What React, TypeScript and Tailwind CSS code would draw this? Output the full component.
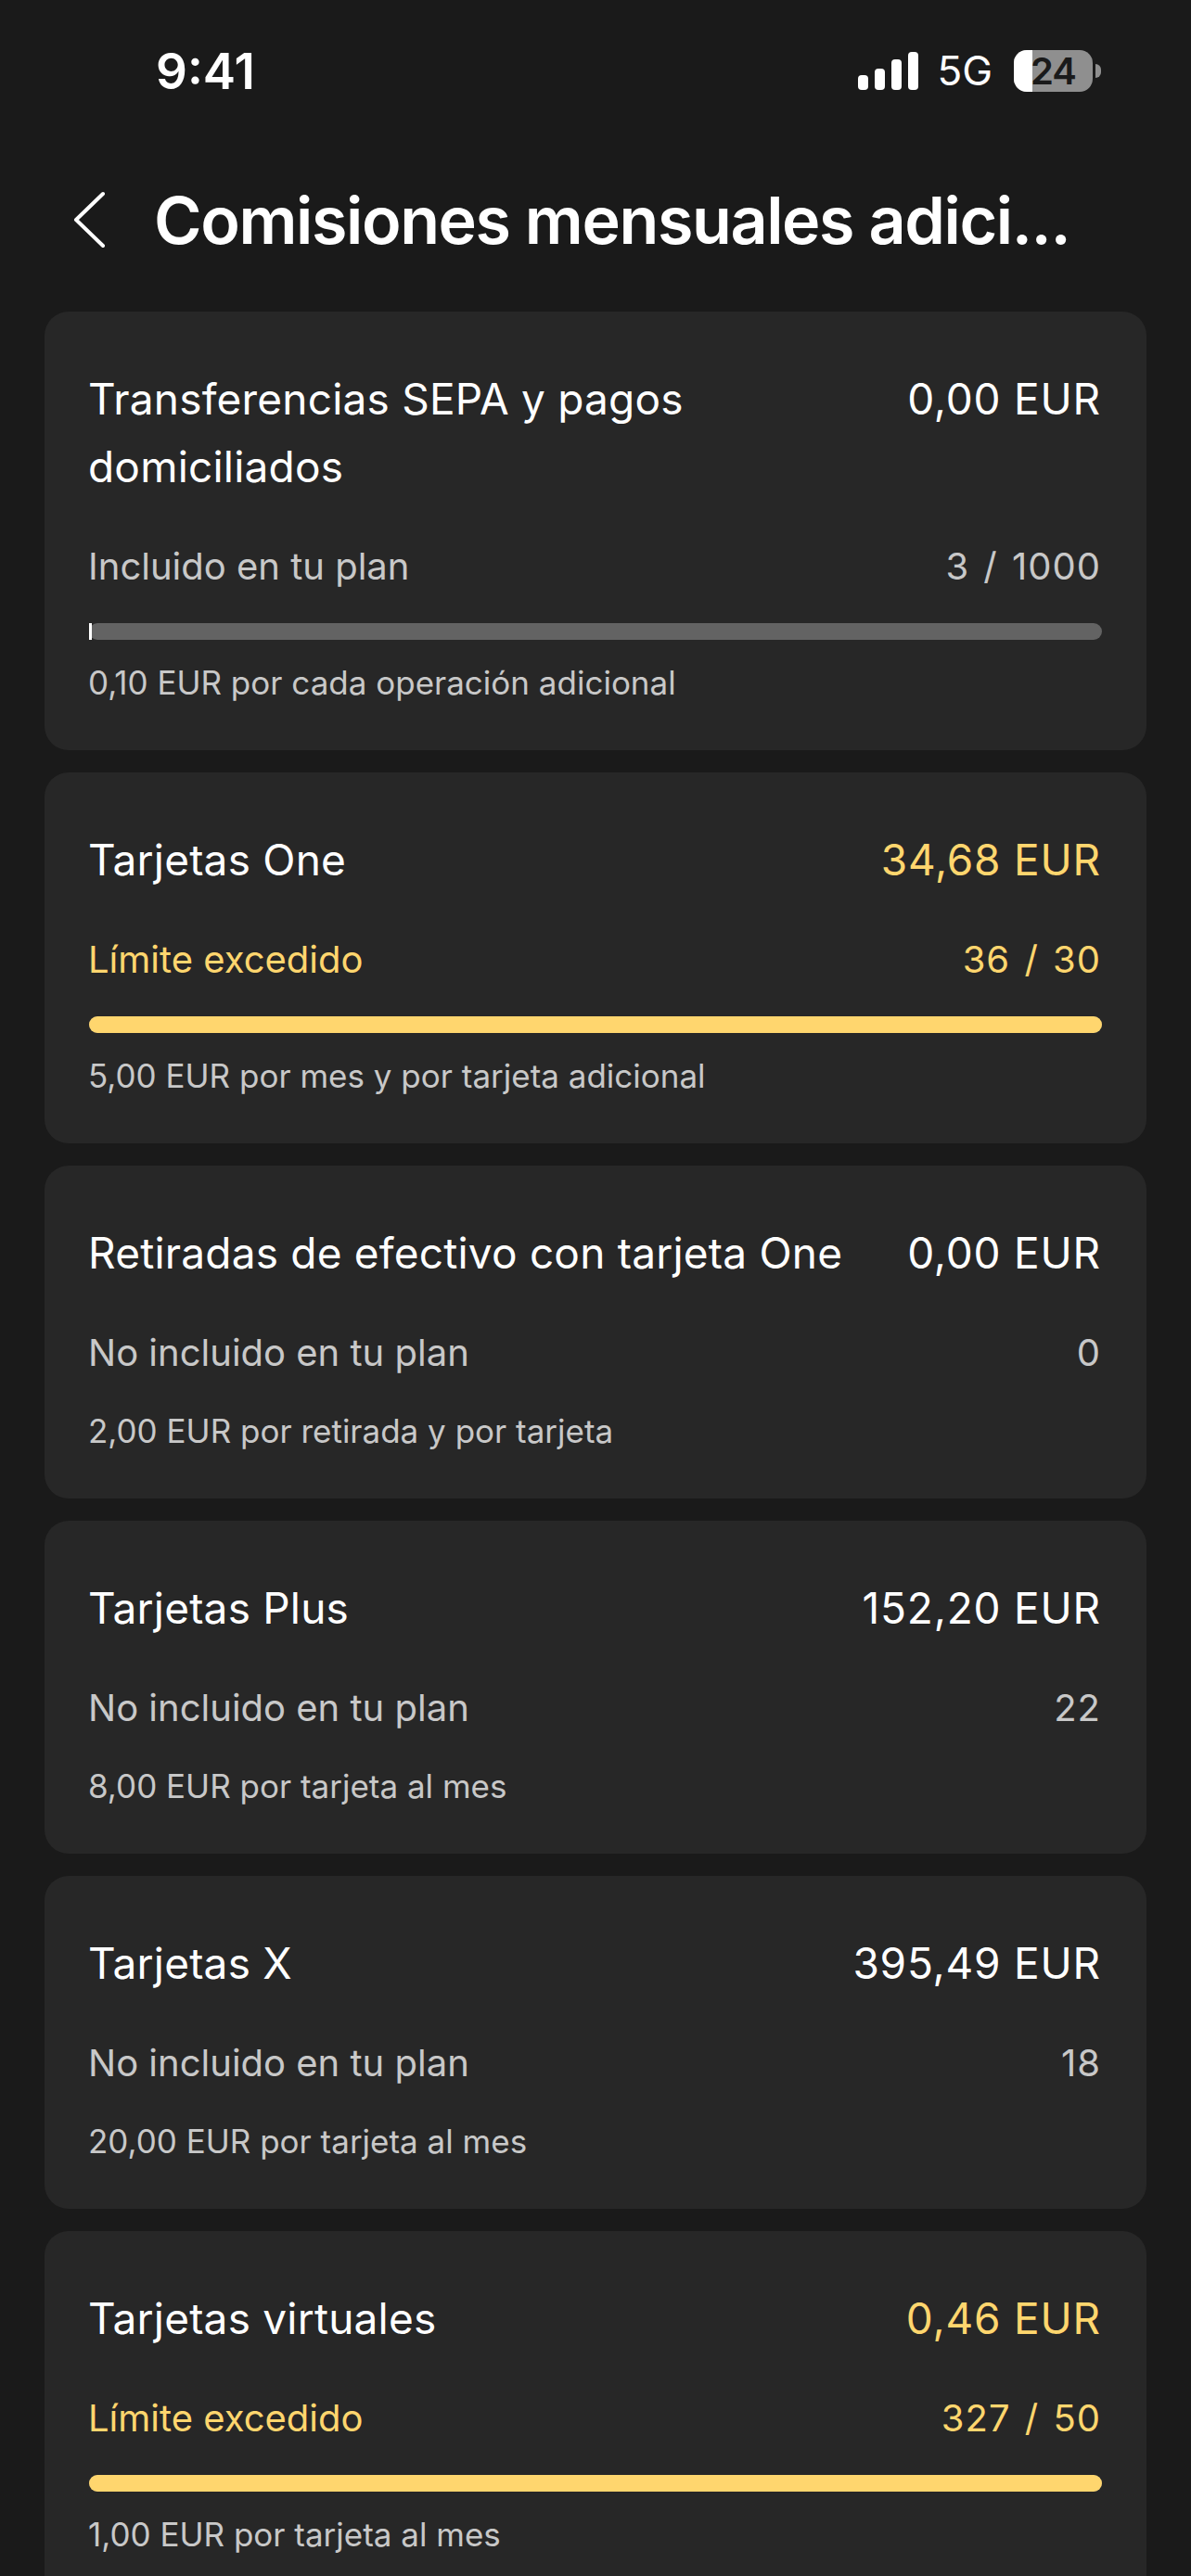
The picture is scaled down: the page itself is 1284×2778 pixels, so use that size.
type Fee = {
  title: string;
  amount: string;
  status: string;
  count: string;
  note: string;
  over?: boolean;
  bar?: "empty" | "full";
};

const fees: Fee[] = [
  { title: "Transferencias SEPA y pagos domiciliados", amount: "0,00 EUR", status: "Incluido en tu plan", count: "3 / 1000", note: "0,10 EUR por cada operación adicional", bar: "empty" },
  { title: "Tarjetas One", amount: "34,68 EUR", status: "Límite excedido", count: "36 / 30", note: "5,00 EUR por mes y por tarjeta adicional", over: true, bar: "full" },
  { title: "Retiradas de efectivo con tarjeta One", amount: "0,00 EUR", status: "No incluido en tu plan", count: "0", note: "2,00 EUR por retirada y por tarjeta" },
  { title: "Tarjetas Plus", amount: "152,20 EUR", status: "No incluido en tu plan", count: "22", note: "8,00 EUR por tarjeta al mes" },
  { title: "Tarjetas X", amount: "395,49 EUR", status: "No incluido en tu plan", count: "18", note: "20,00 EUR por tarjeta al mes" },
  { title: "Tarjetas virtuales", amount: "0,46 EUR", status: "Límite excedido", count: "327 / 50", note: "1,00 EUR por tarjeta al mes", over: true, bar: "full" },
];

function StatusBar() {
  return (
    <div className="flex h-[152px] items-center justify-between pl-[168px] pr-[97px]">
      <span className="pt-[3px] text-[53px] font-semibold text-white">9:41</span>
      <div className="flex items-center">
        <svg width="65" height="41" viewBox="0 0 65 41" fill="white">
          <rect x="0" y="25" width="11" height="16" rx="4" />
          <rect x="18" y="18" width="11" height="23" rx="4" />
          <rect x="36" y="8" width="11" height="33" rx="4" />
          <rect x="54" y="0" width="11" height="41" rx="4" />
        </svg>
        <span className="ml-[20px] text-[44px] leading-none text-white">5G</span>
        <div className="relative ml-[23px] flex h-[45px] w-[85px] items-center justify-center rounded-[14px] bg-[#8f8f8f]">
          <div className="absolute inset-y-0 left-0 w-[20px] rounded-l-[14px] bg-white" />
          <span className="relative text-[40px] font-semibold leading-[45px] tracking-[-1px] text-[#1a1a1a]">24</span>
        </div>
        <div className="ml-[3px] h-[15px] w-[6px] rounded-r-full bg-[#8f8f8f]" />
      </div>
    </div>
  );
}

function FeeCard({ fee }: { fee: Fee }) {
  return (
    <div className="rounded-[26px] bg-[#272727] px-[48px] pt-[58px] pb-[51px]">
      <div className="-ml-px mr-px flex justify-between gap-[60px] text-[46px] leading-[73px]">
        <span className="tracking-[0.2px] text-white">{fee.title}</span>
        <span className={`shrink-0 tracking-[0.8px] ${fee.over ? "text-[#ffd66e]" : "text-white"}`}>{fee.amount}</span>
      </div>
      <div className={`-ml-px mr-px mt-[46px] flex justify-between text-[40px] leading-[50px] ${fee.over ? "text-[#ffd66e]" : "text-[#c8c8c8]"}`}>
        <span>{fee.status}</span>
        <span className="tracking-[1px] [word-spacing:3px]">{fee.count}</span>
      </div>
      {fee.bar && (
        <div className="mt-[36px] h-[18px] rounded-[9px] bg-[#636363]">
          <div className={fee.bar === "full" ? "h-full w-full rounded-[9px] bg-[#ffd66e]" : "h-full w-[3px] bg-white"} />
        </div>
      )}
      <p className={`-ml-px text-[35px] leading-[44px] text-[#c8c8c8] ${fee.bar ? "mt-[24px]" : "mt-[37px]"}`}>{fee.note}</p>
    </div>
  );
}

export default function App() {
  return (
    <div className="h-[2778px] overflow-hidden bg-[#1a1a1a] font-['Inter',sans-serif]">
      <StatusBar />
      <div className="flex h-[184px] items-center pb-[14px] pl-[78px]">
        <svg width="36" height="62" viewBox="0 0 36 62" fill="none" stroke="white" strokeWidth="4" strokeLinecap="round" strokeLinejoin="round">
          <polyline points="33,3 4,31 33,59" />
        </svg>
        <h1 className="ml-[52px] whitespace-nowrap text-[70px] font-semibold tracking-[-1.4px] text-white">Comisiones mensuales adici...</h1>
      </div>
      <div className="flex flex-col gap-[24px] px-[48px]">
        {fees.map((fee) => (
          <FeeCard key={fee.title} fee={fee} />
        ))}
      </div>
    </div>
  );
}
